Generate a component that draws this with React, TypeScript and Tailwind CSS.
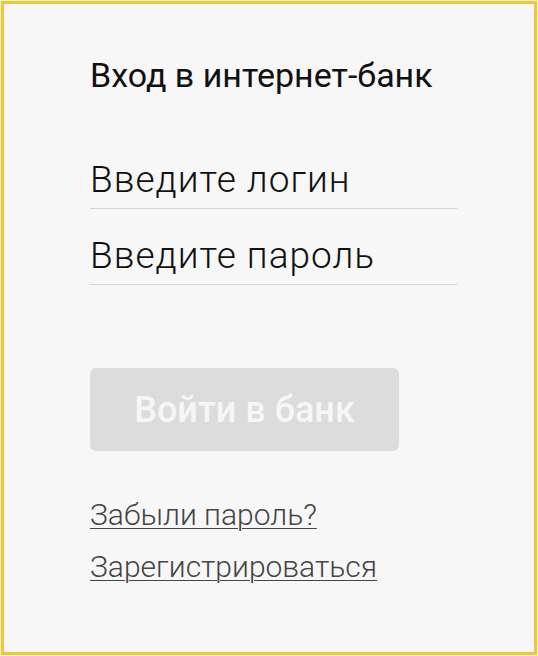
const font = { fontFamily: "Roboto, 'Noto Sans', sans-serif" };

export default function App() {
  return (
    <div className="w-[538px] h-[656px] bg-[#fdf6c8] p-px">
      <div
        className="h-full border-[3px] border-[#efc63c] bg-[#f7f7f7] pl-[86px] pt-[51px]"
        style={font}
      >
        <h1 className="text-[34px] leading-[40px] font-normal text-[#111]">
          Вход в интернет-банк
        </h1>

        <div className="mt-[58px] w-[367px]">
          <div className="border-b border-[#d4d4d4] h-[56px] flex items-end pb-[8px]">
            <span className="text-[37px] leading-[40px] font-light tracking-[1px] text-[#111]">
              Введите логин
            </span>
          </div>
          <div className="border-b border-[#d4d4d4] h-[76px] flex items-end pb-[8px]">
            <span className="text-[37px] leading-[40px] font-light tracking-[1px] text-[#111]">
              Введите пароль
            </span>
          </div>
        </div>

        <button className="mt-[83px] w-[309px] h-[83px] rounded-[6px] bg-[#dcdcdc] text-[#f6f6f6] text-[36px] font-medium flex items-center justify-center">
          Войти в банк
        </button>

        <div className="mt-[48px] flex flex-col gap-[20px] items-start">
          <a className="text-[30px] leading-[32px] font-light text-[#444] underline underline-offset-[3px] decoration-1">
            Забыли пароль?
          </a>
          <a className="text-[30px] leading-[32px] font-light text-[#444] underline underline-offset-[3px] decoration-1">
            Зарегистрироваться
          </a>
        </div>
      </div>
    </div>
  );
}
